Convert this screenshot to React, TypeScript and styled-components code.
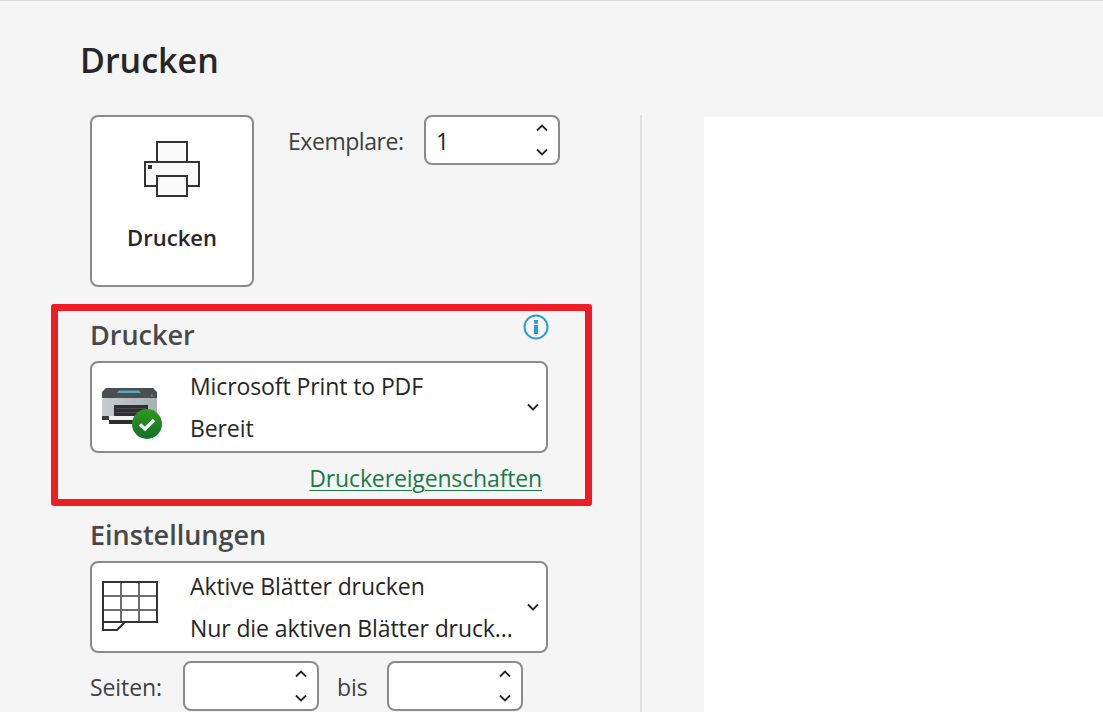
import React from "react";
import styled, { createGlobalStyle } from "styled-components";

const GlobalStyle = createGlobalStyle`
  html, body {
    margin: 0;
    padding: 0;
    height: 100%;
    overflow: hidden;
    background: #f5f5f5;
  }
  body {
    font-family: "Open Sans", "Noto Sans", "Liberation Sans", sans-serif;
    color: #262626;
  }
`;

const Page = styled.div`
  width: 1103px;
  height: 712px;
  box-sizing: border-box;
  border-top: 1px solid #dcdcdc;
  display: flex;
  flex-direction: column;
  overflow: hidden;
`;

const Title = styled.h1`
  margin: 0;
  height: 114px;
  box-sizing: border-box;
  padding: 36px 0 0 80px;
  font-size: 34px;
  line-height: 46px;
  font-weight: 600;
  color: #262626;
`;

const Body = styled.div`
  flex: 1;
  display: flex;
  min-height: 0;
`;

const Panel = styled.div`
  width: 642px;
  box-sizing: border-box;
  padding-left: 90px;
  border-right: 2px solid #e0e0e0;
  flex-shrink: 0;
`;

const Preview = styled.div`
  flex: 1;
  margin: 2px 0 0 62px;
  background: #fff;
`;

const TopRow = styled.div`
  display: flex;
  align-items: flex-start;
  gap: 34px;
`;

const PrintButton = styled.button`
  width: 164px;
  height: 172px;
  box-sizing: border-box;
  border: 2px solid #8a8a8a;
  border-radius: 8px;
  background: #fff;
  padding: 24px 0 0;
  display: flex;
  flex-direction: column;
  align-items: center;
  gap: 25px;
  font-family: inherit;
  font-size: 22px;
  line-height: 30px;
  font-weight: 600;
  color: #262626;
`;

const CopiesRow = styled.div`
  display: flex;
  align-items: center;
  gap: 20px;
`;

const Label = styled.span`
  padding-top: 2px;
  font-size: 23px;
  line-height: 30px;
  letter-spacing: -0.1px;
  color: #404040;
`;

const CopiesLabel = styled(Label)`
  width: 116px;
  white-space: nowrap;
  letter-spacing: -0.45px;
`;

const Spinner = styled.div`
  width: 136px;
  height: 50px;
  box-sizing: border-box;
  border: 2px solid #8a8a8a;
  border-radius: 8px;
  background: #fff;
  display: flex;
  align-items: center;
  justify-content: space-between;
  padding: 0 9px 0 10px;
  font-size: 23px;
  color: #262626;
`;

const SpinValue = styled.span`
  padding-top: 2px;
`;

const Arrows = styled.div`
  display: flex;
  flex-direction: column;
  justify-content: space-between;
  height: 34px;
  width: 14px;
  color: #262626;
`;

const Highlight = styled.section`
  width: 541px;
  height: 202px;
  box-sizing: border-box;
  margin: 17px 0 0 -39px;
  padding: 6px 0 0 32px;
  border: 7px solid #ee1c25;
  border-radius: 3px;
  position: relative;
`;

const Heading = styled.h2`
  margin: 0;
  height: 44px;
  font-size: 27px;
  line-height: 36px;
  font-weight: 600;
  color: #484848;
`;

const InfoMark = styled.svg`
  position: absolute;
  top: 3px;
  right: 36px;
`;

const Dropdown = styled.div`
  width: 458px;
  height: 92px;
  box-sizing: border-box;
  border: 2px solid #8a8a8a;
  border-radius: 8px;
  background: #fff;
  display: flex;
  align-items: center;
  padding: 0 6px 0 10px;
`;

const DropIcon = styled.div<{ $top: number }>`
  width: 88px;
  flex-shrink: 0;
  display: flex;
  margin-top: ${(p) => p.$top}px;
`;

const DropText = styled.div`
  flex: 1;
  min-width: 0;
  display: flex;
  flex-direction: column;
  gap: 12px;
  font-size: 23px;
  line-height: 30px;
  letter-spacing: -0.1px;
  color: #262626;
`;

const DropLine = styled.div`
  white-space: nowrap;
`;

const LinkRow = styled.div`
  width: 452px;
  margin-top: 10px;
  text-align: right;
`;

const PropsLink = styled.a`
  font-size: 23px;
  line-height: 30px;
  letter-spacing: -0.15px;
  color: #1a7a46;
  text-decoration: underline;
  text-underline-offset: 3px;
  text-decoration-thickness: 1px;
`;

const Settings = styled.section`
  margin-top: 11px;
`;

const PagesRow = styled.div`
  margin-top: 8px;
  display: flex;
  align-items: center;
`;

const BisLabel = styled(Label)`
  width: 50px;
  margin-left: 18px;
`;

const PagesLabel = styled(Label)`
  width: 93px;
`;

const Chevron = ({ up = false }: { up?: boolean }) => (
  <svg width={14} height={10} viewBox="0 0 14 10" fill="none">
    <path
      d={up ? "M2 7.5 L7 2.5 L12 7.5" : "M2 2.5 L7 7.5 L12 2.5"}
      stroke="currentColor"
      strokeWidth="1.8"
    />
  </svg>
);

const SpinBox = ({ value }: { value?: string }) => (
  <Spinner>
    <SpinValue>{value}</SpinValue>
    <Arrows>
      <Chevron up />
      <Chevron />
    </Arrows>
  </Spinner>
);

const PrinterGlyph = () => (
  <svg width="56" height="56" viewBox="0 0 56 56" fill="#fafafa" stroke="#333" strokeWidth="2">
    <rect x="13" y="1" width="30" height="20" />
    <rect x="1" y="21" width="54" height="24" />
    <rect x="13" y="35" width="30" height="20" />
    <rect x="4" y="24" width="4" height="4" fill="#333" stroke="none" />
  </svg>
);

const PrinterDevice = () => (
  <svg width="60" height="52" viewBox="0 0 60 52">
    <defs>
      <linearGradient id="shell" x1="0" y1="0" x2="1" y2="0">
        <stop offset="0" stopColor="#c8ccd0" />
        <stop offset="1" stopColor="#a9afb3" />
      </linearGradient>
      <linearGradient id="okBadge" x1="0" y1="0" x2="0" y2="1">
        <stop offset="0" stopColor="#2f9a1c" />
        <stop offset="1" stopColor="#14702a" />
      </linearGradient>
    </defs>
    <path d="M4 0 H51 L55 4 V11 H0 V4 Z" fill="#4b4e51" />
    <path d="M15 5 L17 2.5 H37 L39 5 Z" fill="#5aa7b8" />
    <rect x="49" y="6.5" width="2" height="2" fill="#3fa34d" />
    <rect x="0" y="10" width="55" height="18" fill="url(#shell)" />
    <rect x="0" y="28" width="7" height="4" fill="#3a3a3c" />
    <rect x="12" y="17" width="34" height="11" fill="#2f2f31" />
    <rect x="14" y="20" width="30" height="1" fill="#4a4a4c" />
    <rect x="14" y="24" width="30" height="1" fill="#4a4a4c" />
    <rect x="7" y="28" width="28" height="4" fill="#efefef" />
    <rect x="7" y="32" width="30" height="4" fill="#2c2c2c" />
    <circle cx="45" cy="36" r="15" fill="url(#okBadge)" />
    <path d="M38 36.5 L43 41 L52 32" fill="none" stroke="#fff" strokeWidth="3.4" />
  </svg>
);

const SheetGlyph = () => (
  <svg width="56" height="50" viewBox="0 0 56 50" fill="none">
    <path d="M19 1 V41 M37 1 V41 M1 15 H55 M1 29 H55" stroke="#6e6e6e" strokeWidth="2" />
    <path d="M1 1 H55 V41 H1 Z M1 41 V49 H15 L23 41" stroke="#333" strokeWidth="2" />
  </svg>
);

export default function App() {
  return (
    <Page>
      <GlobalStyle />
      <Title>Drucken</Title>
      <Body>
        <Panel>
          <TopRow>
            <PrintButton>
              <PrinterGlyph />
              Drucken
            </PrintButton>
            <CopiesRow>
              <CopiesLabel>Exemplare:</CopiesLabel>
              <SpinBox value="1" />
            </CopiesRow>
          </TopRow>

          <Highlight>
            <Heading>Drucker</Heading>
            <InfoMark width="26" height="26" viewBox="0 0 26 26">
              <circle cx="13" cy="13" r="11.5" fill="none" stroke="#2b9ad6" strokeWidth="2" />
              <rect x="11" y="11" width="4" height="9" fill="#2b9ad6" />
              <rect x="11" y="6" width="4" height="3.5" fill="#2b9ad6" />
            </InfoMark>
            <Dropdown>
              <DropIcon $top={13}>
                <PrinterDevice />
              </DropIcon>
              <DropText>
                <DropLine>Microsoft Print to PDF</DropLine>
                <DropLine>Bereit</DropLine>
              </DropText>
              <Chevron />
            </Dropdown>
            <LinkRow>
              <PropsLink href="#">Druckereigenschaften</PropsLink>
            </LinkRow>
          </Highlight>

          <Settings>
            <Heading>Einstellungen</Heading>
            <Dropdown>
              <DropIcon $top={-2}>
                <SheetGlyph />
              </DropIcon>
              <DropText>
                <DropLine>Aktive Blätter drucken</DropLine>
                <DropLine>Nur die aktiven Blätter druck...</DropLine>
              </DropText>
              <Chevron />
            </Dropdown>
            <PagesRow>
              <PagesLabel>Seiten:</PagesLabel>
              <SpinBox />
              <BisLabel>bis</BisLabel>
              <SpinBox />
            </PagesRow>
          </Settings>
        </Panel>
        <Preview />
      </Body>
    </Page>
  );
}
